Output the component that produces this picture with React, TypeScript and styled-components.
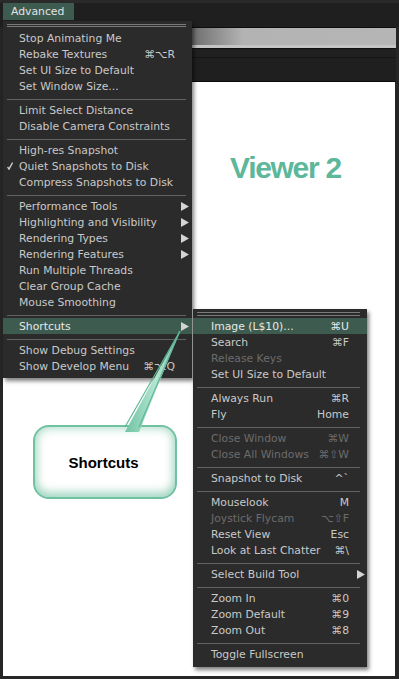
import styled, { createGlobalStyle } from 'styled-components'

const GlobalStyle = createGlobalStyle`
  html, body { margin: 0; padding: 0; background: #262626; }
  body { font-family: "DejaVu Sans", "Liberation Sans", sans-serif; }
`

type Entry =
    | 'sep'
    | { label: string; shortcut?: string; arrow?: boolean; checked?: boolean; disabled?: boolean; active?: boolean }

const mainItems: Entry[] = [
    { label: 'Stop Animating Me' },
    { label: 'Rebake Textures', shortcut: '⌘⌥R' },
    { label: 'Set UI Size to Default' },
    { label: 'Set Window Size...' },
    'sep',
    { label: 'Limit Select Distance' },
    { label: 'Disable Camera Constraints' },
    'sep',
    { label: 'High-res Snapshot' },
    { label: 'Quiet Snapshots to Disk', checked: true },
    { label: 'Compress Snapshots to Disk' },
    'sep',
    { label: 'Performance Tools', arrow: true },
    { label: 'Highlighting and Visibility', arrow: true },
    { label: 'Rendering Types', arrow: true },
    { label: 'Rendering Features', arrow: true },
    { label: 'Run Multiple Threads' },
    { label: 'Clear Group Cache' },
    { label: 'Mouse Smoothing' },
    'sep',
    { label: 'Shortcuts', arrow: true, active: true },
    'sep',
    { label: 'Show Debug Settings' },
    { label: 'Show Develop Menu', shortcut: '⌘⌥Q' },
]

const shortcutItems: Entry[] = [
    { label: 'Image (L$10)...', shortcut: '⌘U', active: true },
    { label: 'Search', shortcut: '⌘F' },
    { label: 'Release Keys', disabled: true },
    { label: 'Set UI Size to Default' },
    'sep',
    { label: 'Always Run', shortcut: '⌘R' },
    { label: 'Fly', shortcut: 'Home' },
    'sep',
    { label: 'Close Window', shortcut: '⌘W', disabled: true },
    { label: 'Close All Windows', shortcut: '⌘⇧W', disabled: true },
    'sep',
    { label: 'Snapshot to Disk', shortcut: '^`' },
    'sep',
    { label: 'Mouselook', shortcut: 'M' },
    { label: 'Joystick Flycam', shortcut: '⌥⇧F', disabled: true },
    { label: 'Reset View', shortcut: 'Esc' },
    { label: 'Look at Last Chatter', shortcut: '⌘\\' },
    'sep',
    { label: 'Select Build Tool', arrow: true },
    'sep',
    { label: 'Zoom In', shortcut: '⌘0' },
    { label: 'Zoom Default', shortcut: '⌘9' },
    { label: 'Zoom Out', shortcut: '⌘8' },
    'sep',
    { label: 'Toggle Fullscreen' },
]

const Frame = styled.div`
    position: relative;
    width: 399px;
    height: 679px;
    overflow: hidden;
    display: flex;
    flex-direction: column;
    background: #262626;
`

const TopBar = styled.div`
    height: 27px;
    box-sizing: border-box;
    padding: 3px 0 0 3px;
    background: linear-gradient(#2a2a2a 0 3px, #1f1f1f 3px);
    display: flex;
    align-items: flex-start;
`

const MenuTab = styled.div`
    height: 17px;
    line-height: 17px;
    padding: 0 10px 0 8px;
    background: #3d5c4f;
    color: #e2e2e2;
    font-size: 10.8px;
`

const Body = styled.div`
    flex: 1;
    display: flex;
    flex-direction: column;
    padding: 0 4px 3px 3px;
`

const NavBar = styled.div`
    display: flex;
    flex-direction: column;
    margin-right: -1px;
`

const AddressBar = styled.div`
    height: 17px;
    border-top: 1px solid #0d0d0d;
    background: linear-gradient(to right, #5e5e5e 0, #6c6c6c 188px, #b3b3b3 240px, #b5b5b5 100%);
`

const AddressUnderline = styled.div`
    height: 3px;
    background: #c4c4c4;
`

const NavStrip = styled.div`
    height: 8px;
    border-top: 1px solid #0f0f0f;
    border-bottom: 1px solid #151515;
    background: #202020;
`

const NavFill = styled.div`
    height: 23px;
    background: #1f1f1f;
    border-bottom: 1px solid #0b0b0b;
`

const Content = styled.div`
    flex: 1;
    background: #ffffff;
    padding: 71px 0 0 227px;
`

const Heading = styled.h1`
    margin: 0;
    font-family: "Liberation Sans", Arial, sans-serif;
    font-weight: bold;
    font-size: 30px;
    line-height: 30px;
    letter-spacing: -1.3px;
    color: #5db79a;
`

const MenuPanel = styled.div<{ $left: number; $top: number; $width: number; $bottom: number }>`
    position: absolute;
    left: ${p => p.$left}px;
    top: ${p => p.$top}px;
    width: ${p => p.$width}px;
    padding-bottom: ${p => p.$bottom}px;
    background: #2b2b2b;
    box-shadow: 2px 3px 4px rgba(0, 0, 0, 0.5);
    font-size: 10.8px;
`

const MenuHeader = styled.div<{ $top: number; $gap: number; $l: number; $r: number }>`
    height: 9px;
    box-sizing: border-box;
    padding: ${p => p.$top}px ${p => p.$r}px 0 ${p => p.$l}px;
    display: flex;
    flex-direction: column;
    gap: ${p => p.$gap}px;
`

const HeaderLine = styled.div`
    height: 1px;
    background: #7a7a7a;
`

const Separator = styled.div<{ $l: number; $r: number }>`
    height: 8px;
    box-sizing: border-box;
    padding: 5px ${p => p.$r}px 0 ${p => p.$l}px;
    &::after {
        content: '';
        display: block;
        height: 1px;
        background: #626262;
    }
`

const Row = styled.div<{ $inset: number; $slot: number; $active?: boolean; $disabled?: boolean }>`
    height: 16px;
    display: grid;
    grid-template-columns: ${p => p.$inset}px 1fr auto ${p => p.$slot}px;
    align-items: center;
    white-space: nowrap;
    background: ${p => (p.$active ? '#3d5c4f' : 'transparent')};
    color: ${p => (p.$disabled ? '#6c6c6c' : p.$active ? '#e8e8e8' : '#c9c9c9')};
`

const CheckCell = styled.span`
    display: flex;
    padding-left: 4px;
`

const Label = styled.span``

const Shortcut = styled.span`
    text-align: right;
`

const ArrowCell = styled.span<{ $pad: number }>`
    display: flex;
    justify-content: flex-end;
    padding-right: ${p => p.$pad}px;
`

const Callout = styled.div`
    position: absolute;
    left: 33px;
    top: 425px;
    width: 144px;
    height: 74px;
    box-sizing: border-box;
    border: 2px solid #6fc1a1;
    border-radius: 16px;
    background: #ffffff;
    box-shadow: inset 0 0 9px 2px rgba(111, 193, 161, 0.5), inset 0 -6px 8px rgba(111, 193, 161, 0.35);
    display: flex;
    align-items: center;
    justify-content: center;
`

const CalloutText = styled.span`
    font-family: "Liberation Sans", Arial, sans-serif;
    font-weight: bold;
    font-size: 15px;
    color: #000;
    margin-left: -3px;
`

const Tail = styled.svg`
    position: absolute;
    left: 118px;
    top: 326px;
`

function Arrow() {
    return (
        <svg width="8" height="9" viewBox="0 0 8 9">
            <polygon points="0,0 8,4.5 0,9" fill="#d4d4d4" />
        </svg>
    )
}

function Check() {
    return (
        <svg width="6" height="8" viewBox="0 0 6 8">
            <path d="M0.6 4.8 L2 7.2 L5.6 0.6" stroke="#c9c9c9" strokeWidth="1.4" fill="none" />
        </svg>
    )
}

function Menu({ items, left, top, width, bottom, inset, slot, arrowPad, sepL, sepR, headTop, headGap }: {
    items: Entry[]; left: number; top: number; width: number; bottom: number; inset: number; slot: number
    arrowPad: number; sepL: number; sepR: number; headTop: number; headGap: number
}) {
    return (
        <MenuPanel $left={left} $top={top} $width={width} $bottom={bottom}>
            <MenuHeader $top={headTop} $gap={headGap} $l={sepL} $r={sepR}>
                <HeaderLine />
                <HeaderLine />
            </MenuHeader>
            {items.map((it, i) =>
                it === 'sep' ? (
                    <Separator key={i} $l={sepL} $r={sepR} />
                ) : (
                    <Row key={i} $inset={inset} $slot={slot} $active={it.active} $disabled={it.disabled}>
                        <CheckCell>{it.checked && <Check />}</CheckCell>
                        <Label>{it.label}</Label>
                        <Shortcut>{it.shortcut}</Shortcut>
                        <ArrowCell $pad={arrowPad}>{it.arrow && <Arrow />}</ArrowCell>
                    </Row>
                )
            )}
        </MenuPanel>
    )
}

export default function App() {
    return (
        <>
            <GlobalStyle />
            <Frame>
                <TopBar>
                    <MenuTab>Advanced</MenuTab>
                </TopBar>
                <Body>
                    <NavBar>
                        <AddressBar />
                        <AddressUnderline />
                        <NavStrip />
                        <NavFill />
                    </NavBar>
                    <Content>
                        <Heading>Viewer 2</Heading>
                    </Content>
                </Body>

                <Menu items={mainItems} left={3} top={21} width={189} bottom={4}
                    inset={16} slot={17} arrowPad={3} sepL={4} sepR={6} headTop={3} headGap={1} />
                <Menu items={shortcutItems} left={193} top={309} width={174} bottom={5}
                    inset={18} slot={18} arrowPad={2} sepL={4} sepR={7} headTop={3} headGap={2} />

                <Callout>
                    <CalloutText>Shortcuts</CalloutText>
                </Callout>
                <Tail width="70" height="110" viewBox="0 0 70 110">
                    <defs>
                        <linearGradient id="tailFill" x1="0" y1="0" x2="1" y2="0">
                            <stop offset="0" stopColor="#6fc3a3" />
                            <stop offset="0.55" stopColor="#b3e5d2" />
                            <stop offset="1" stopColor="#74c5a6" />
                        </linearGradient>
                    </defs>
                    <polygon points="62,5 7,106 21,106" fill="url(#tailFill)" />
                    <line x1="62" y1="5" x2="7" y2="101" stroke="#5fb696" strokeWidth="1.2" />
                    <line x1="62" y1="5" x2="21" y2="101" stroke="#5fb696" strokeWidth="1.2" />
                </Tail>
            </Frame>
        </>
    )
}
